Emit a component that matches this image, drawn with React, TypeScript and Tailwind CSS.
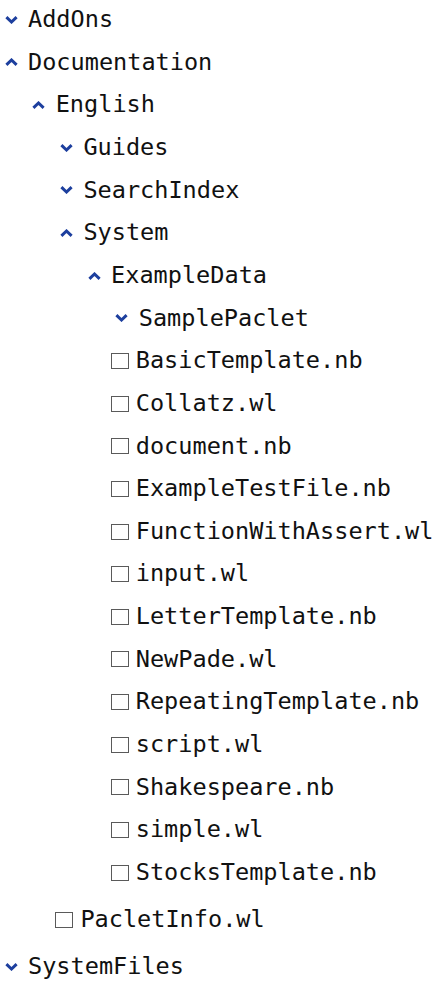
import React from 'react';

type Node = {
  name: string;
  open?: boolean;
  children?: Node[];
  file?: boolean;
};

const tree: Node[] = [
  { name: 'AddOns' },
  {
    name: 'Documentation',
    open: true,
    children: [
      {
        name: 'English',
        open: true,
        children: [
          { name: 'Guides' },
          { name: 'SearchIndex' },
          {
            name: 'System',
            open: true,
            children: [
              {
                name: 'ExampleData',
                open: true,
                children: [
                  { name: 'SamplePaclet' },
                  { name: 'BasicTemplate.nb', file: true },
                  { name: 'Collatz.wl', file: true },
                  { name: 'document.nb', file: true },
                  { name: 'ExampleTestFile.nb', file: true },
                  { name: 'FunctionWithAssert.wl', file: true },
                  { name: 'input.wl', file: true },
                  { name: 'LetterTemplate.nb', file: true },
                  { name: 'NewPade.wl', file: true },
                  { name: 'RepeatingTemplate.nb', file: true },
                  { name: 'script.wl', file: true },
                  { name: 'Shakespeare.nb', file: true },
                  { name: 'simple.wl', file: true },
                  { name: 'StocksTemplate.nb', file: true },
                ],
              },
            ],
          },
          { name: 'PacletInfo.wl', file: true },
        ],
      },
    ],
  },
  { name: 'SystemFiles' },
];

function Chevron({ up }: { up?: boolean }) {
  return (
    <svg width="13" height="8" viewBox="0 0 13 8" className="shrink-0">
      <polyline
        points={up ? '1.4,6.8 6.5,2 11.6,6.8' : '1.4,1.2 6.5,6 11.6,1.2'}
        fill="none"
        stroke="#1d3f9e"
        strokeWidth="3"
        strokeLinecap="butt"
        strokeLinejoin="miter"
      />
    </svg>
  );
}

function Row({ node }: { node: Node }) {
  if (node.file) {
    return (
      <div className="flex items-center h-[42.65px]">
        <span className="w-[18px] h-[16px] border border-[#5a5a5a] bg-white shrink-0" />
        <span className="ml-[7px]">{node.name}</span>
      </div>
    );
  }
  return (
    <div className="flex items-center h-[42.65px]">
      <span className="ml-[4.5px] flex items-center">
        <Chevron up={node.open} />
      </span>
      <span className="ml-[10.5px]">{node.name}</span>
    </div>
  );
}

function Branch({ nodes }: { nodes: Node[] }) {
  return (
    <ul>
      {nodes.map((n) => (
        <li key={n.name}>
          <Row node={n} />
          {n.open && n.children && (
            <div className="pl-[27.7px] pb-[2.25px]">
              <Branch nodes={n.children} />
            </div>
          )}
        </li>
      ))}
    </ul>
  );
}

export default function App() {
  return (
    <div
      className="w-[438px] h-[984px] overflow-hidden bg-white text-[#111] text-[23.55px] whitespace-nowrap"
      style={{ fontFamily: '"DejaVu Sans Mono", monospace' }}
    >
      <div className="-mt-[1.5px]">
        <Branch nodes={tree} />
      </div>
    </div>
  );
}
